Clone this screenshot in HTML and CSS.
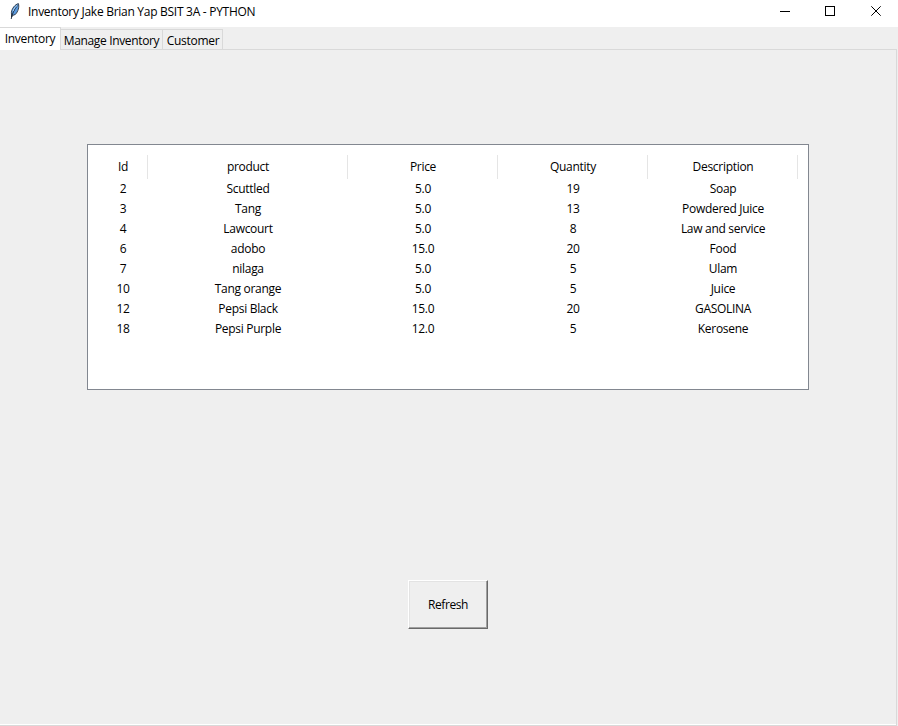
FILE: index.html
```html
<!DOCTYPE html>
<html lang="en">
<head>
<meta charset="utf-8">
<title>Inventory Jake Brian Yap BSIT 3A - PYTHON</title>
<link rel="stylesheet" href="styles.css">
</head>
<body>
<div class="window">
  <header class="titlebar">
    <svg class="feather" width="12" height="18" viewBox="0 0 12 18">
      <path d="M2.6 15 2.4 10.5 C2.8 6.5 6 2.5 9.4 1.6 C10.4 5 9.2 9.5 6.4 12.4 L3.4 13.6Z" fill="#5b9be0" stroke="#27303c" stroke-width=".9"/>
      <path d="M2.2 17 C3 12 5.2 7.5 8.4 3.6" fill="none" stroke="#13202f" stroke-width=".9"/>
      <path d="M4 9.2 C4.8 6.6 6.5 4.5 8.2 3.4" fill="none" stroke="#b5d8fa" stroke-width="1"/>
    </svg>
    <h1 class="title">Inventory Jake Brian Yap BSIT 3A - PYTHON</h1>
    <div class="controls">
      <svg class="minimize" width="10" height="11" viewBox="0 0 10 11" shape-rendering="crispEdges"><path d="M0 5.5H10" stroke="#000"/></svg>
      <svg width="11" height="11" viewBox="0 0 11 11" shape-rendering="crispEdges"><path d="M.5 .5H9.5V9.5H.5Z" fill="none" stroke="#000"/></svg>
      <svg width="11" height="11" viewBox="0 0 11 11"><path d="M.3 .3 9.7 9.7M9.7 .3 .3 9.7" stroke="#000" stroke-width="1"/></svg>
    </div>
  </header>
  <nav class="tabs">
    <span class="tab active">Inventory</span>
    <span class="tab manage">Manage Inventory</span>
    <span class="tab customer">Customer</span>
  </nav>
  <main class="pane">
    <div class="tree">
      <div class="row head"><span>Id</span><span>product</span><span>Price</span><span>Quantity</span><span>Description</span></div>
      <div class="row"><span>2</span><span>Scuttled</span><span>5.0</span><span>19</span><span>Soap</span></div>
      <div class="row"><span>3</span><span>Tang</span><span>5.0</span><span>13</span><span>Powdered Juice</span></div>
      <div class="row"><span>4</span><span>Lawcourt</span><span>5.0</span><span>8</span><span>Law and service</span></div>
      <div class="row"><span>6</span><span>adobo</span><span>15.0</span><span>20</span><span>Food</span></div>
      <div class="row"><span>7</span><span>nilaga</span><span>5.0</span><span>5</span><span>Ulam</span></div>
      <div class="row"><span>10</span><span>Tang orange</span><span>5.0</span><span>5</span><span>Juice</span></div>
      <div class="row"><span>12</span><span>Pepsi Black</span><span>15.0</span><span>20</span><span>GASOLINA</span></div>
      <div class="row"><span>18</span><span>Pepsi Purple</span><span>12.0</span><span>5</span><span>Kerosene</span></div>
    </div>
    <button class="refresh" type="button">Refresh</button>
  </main>
</div>
</body>
</html>
```
FILE: styles.css
```css
* { box-sizing: border-box; }
body {
  margin: 0;
  font: 12px/20px "Open Sans", "Noto Sans", sans-serif;
  letter-spacing: -0.3px;
  color: #000;
  background: #efefef;
}
.window { display: flex; flex-direction: column; width: 898px; height: 726px; overflow: hidden; }
.titlebar { display: flex; flex: none; height: 27px; background: #fff; }
.feather { margin: 2px 0 0 9px; }
.title { margin: 2px 0 0 7px; font-size: 12px; font-weight: 400; letter-spacing: -0.28px; white-space: nowrap; }
.controls { display: flex; gap: 35px; margin: 6px 16px 0 auto; }
.controls svg { display: block; }
.tabs { display: flex; flex: none; align-items: flex-end; height: 23px; background: linear-gradient(#d9d9d9, #d9d9d9) left bottom / 897px 1px no-repeat; }
.tab { height: 21px; border: 1px solid #d9d9d9; border-left: 0; text-align: center; line-height: 22px; white-space: nowrap; }
.tab.active { width: 61px; height: 23px; border-bottom: 0; background: #fff; }
.tab.manage { width: 102px; letter-spacing: -0.35px; }
.tab.customer { width: 60px; padding-left: 1px; }
.pane { display: flex; flex: 1; flex-direction: column; align-items: center; width: 897px; padding-top: 94px; border-right: 1px solid #d9d9d9; border-bottom: 1px solid #d9d9d9; box-shadow: inset 0 -1px #fff; }
.tree { flex: none; width: 722px; height: 246px; padding: 10px; border: 1px solid #828790; background: #fff; }
.row { display: grid; grid-template-columns: 50px 200px 150px 150px 150px; height: 20px; text-align: center; line-height: 20px; }
.head { height: 24px; line-height: 24px; }
.head span { padding-left: 1px; border-right: 1px solid #e5e5e5; }
.refresh {
  flex: none;
  width: 80px;
  height: 49px;
  margin-top: 190px;
  padding: 0;
  border: 1px solid;
  border-color: #fff #696969 #696969 #fff;
  box-shadow: inset -1px -1px #a0a0a0, inset 1px 1px #e3e3e3;
  background: #efefef;
  color: #000;
  font: inherit;
  letter-spacing: -0.4px;
}
```
